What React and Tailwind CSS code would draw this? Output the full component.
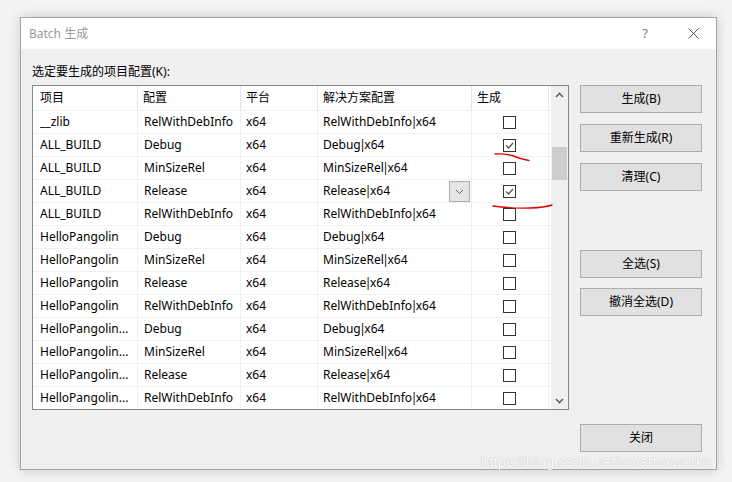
import React from "react"

const rows = [
  ["__zlib", "RelWithDebInfo", "x64", "RelWithDebInfo|x64", false],
  ["ALL_BUILD", "Debug", "x64", "Debug|x64", true],
  ["ALL_BUILD", "MinSizeRel", "x64", "MinSizeRel|x64", false],
  ["ALL_BUILD", "Release", "x64", "Release|x64", true, true],
  ["ALL_BUILD", "RelWithDebInfo", "x64", "RelWithDebInfo|x64", false],
  ["HelloPangolin", "Debug", "x64", "Debug|x64", false],
  ["HelloPangolin", "MinSizeRel", "x64", "MinSizeRel|x64", false],
  ["HelloPangolin", "Release", "x64", "Release|x64", false],
  ["HelloPangolin", "RelWithDebInfo", "x64", "RelWithDebInfo|x64", false],
  ["HelloPangolin...", "Debug", "x64", "Debug|x64", false],
  ["HelloPangolin...", "MinSizeRel", "x64", "MinSizeRel|x64", false],
  ["HelloPangolin...", "Release", "x64", "Release|x64", false],
  ["HelloPangolin...", "RelWithDebInfo", "x64", "RelWithDebInfo|x64", false],
]

function Checkbox({ checked }) {
  return (
    <div className="w-[13px] h-[13px] border border-[#333] bg-white flex items-center justify-center">
      {checked && (
        <svg width="11" height="11" viewBox="0 0 11 11">
          <path d="M2 5.5 L4.5 8 L9 3" fill="none" stroke="#555" strokeWidth="1.3" />
        </svg>
      )}
    </div>
  )
}

function Button({ children, className = "" }) {
  return (
    <div className={"w-[122px] h-[28px] bg-[#e1e1e1] border border-[#adadad] flex items-center justify-center text-[12px] text-black " + className}>
      {children}
    </div>
  )
}

// solution config text, pipe drawn tight like the original font
function SolutionConfig({ text }) {
  const [a, b] = text.split("|")
  return (
    <span>
      {a}
      <span className="mx-[-1.5px]">|</span>
      {b}
    </span>
  )
}

export default function App() {
  return (
    <div
      className="w-[732px] h-[482px] bg-[#f4f4f4] relative overflow-hidden pl-[20px] pt-[17px]"
      style={{ fontFamily: '"Noto Sans", "Noto Sans CJK SC", sans-serif' }}
    >
      {/* dialog */}
      <div className="w-[697px] h-[453px] border border-[#a3a3a3] bg-[#f0f0f0] shadow-[0_0_12px_rgba(0,0,0,0.18)] flex flex-col">
        {/* title bar */}
        <div className="h-[31px] bg-white flex items-center pl-[8px] shrink-0">
          <span className="text-[12px] text-[#9a9a9a] flex-1">Batch 生成</span>
          <span className="text-[13px] text-[#7a7a7a] mr-[40px]">?</span>
          <svg width="11" height="11" viewBox="0 0 11 11" className="mr-[17px]">
            <path d="M0.5 0.5 L10.5 10.5 M10.5 0.5 L0.5 10.5" stroke="#555" strokeWidth="1" />
          </svg>
        </div>

        {/* body */}
        <div className="flex pl-[11px] pt-[14px]">
          <div className="w-[537px]">
            <div className="text-[12px] leading-[18px] h-[18px] mb-[4px] text-black">选定要生成的项目配置(K):</div>
            <div className="h-[325px] border border-[#828790] bg-white flex">
              <div className="w-[518px] text-[12px] text-black">
                {/* header */}
                <div className="flex h-[24px] items-center">
                  <div className="w-[105px] h-full flex items-center pl-[7px] border-r border-[#e5e5e5]">项目</div>
                  <div className="w-[103px] h-full flex items-center pl-[5px] border-r border-[#e5e5e5]">配置</div>
                  <div className="w-[77px] h-full flex items-center pl-[5px] border-r border-[#e5e5e5]">平台</div>
                  <div className="w-[154px] h-full flex items-center pl-[5px] border-r border-[#e5e5e5]">解决方案配置</div>
                  <div className="w-[77px] h-full flex items-center pl-[5px] border-r border-[#e5e5e5]">生成</div>
                </div>
                {rows.map((r, i) => (
                  <div key={i} className="flex h-[23px] border-t border-[#f0f0f0]">
                    <div className="w-[105px] flex items-center pl-[7px] border-r border-[#f0f0f0] whitespace-nowrap">{r[0]}</div>
                    <div className="w-[103px] flex items-center pl-[6px] border-r border-[#f0f0f0] whitespace-nowrap">{r[1]}</div>
                    <div className="w-[77px] flex items-center pl-[5px] border-r border-[#f0f0f0]">{r[2]}</div>
                    <div className="w-[154px] flex items-center justify-between pl-[5px] border-r border-[#f0f0f0] whitespace-nowrap">
                      <SolutionConfig text={r[3]} />
                      {r[5] && (
                        <div className="w-[21px] h-[21px] mr-[1px] self-end bg-[#e5e5e5] border border-[#adadad] flex items-center justify-center">
                          <svg width="9" height="6" viewBox="0 0 9 6">
                            <path d="M1 1 L4.5 4.5 L8 1" fill="none" stroke="#666" strokeWidth="1" />
                          </svg>
                        </div>
                      )}
                    </div>
                    <div className="w-[77px] flex items-center justify-center pr-[2px] border-r border-[#f0f0f0]">
                      <Checkbox checked={r[4]} />
                    </div>
                  </div>
                ))}
              </div>
              {/* scrollbar */}
              <div className="w-[17px] h-full bg-[#f0f0f0] flex flex-col items-center">
                <div className="h-[17px] flex items-center justify-center">
                  <svg width="9" height="6" viewBox="0 0 9 6">
                    <path d="M1 5 L4.5 1.5 L8 5" fill="none" stroke="#606060" strokeWidth="1.6" />
                  </svg>
                </div>
                <div className="w-[15px] h-[33px] bg-[#cdcdcd] mt-[44px]" />
                <div className="flex-1" />
                <div className="h-[17px] flex items-center justify-center">
                  <svg width="9" height="6" viewBox="0 0 9 6">
                    <path d="M1 1 L4.5 4.5 L8 1" fill="none" stroke="#606060" strokeWidth="1.6" />
                  </svg>
                </div>
              </div>
            </div>
          </div>

          {/* buttons */}
          <div className="ml-[11px] pt-[22px] flex flex-col">
            <Button>生成(B)</Button>
            <Button className="mt-[11px]">重新生成(R)</Button>
            <Button className="mt-[11px]">清理(C)</Button>
            <Button className="mt-[59px]">全选(S)</Button>
            <Button className="mt-[10px]">撤消全选(D)</Button>
            <Button className="mt-[108px]">关闭</Button>
          </div>
        </div>
      </div>

      {/* red hand-drawn marks */}
      <svg className="absolute left-0 top-0 pointer-events-none" width="732" height="482">
        <path d="M495 154 Q505 153.5 512 155.5 Q520 159 529 160.5" fill="none" stroke="#e60000" strokeWidth="1.4" strokeLinecap="round" />
        <path d="M493 206 Q510 208.5 530 208 Q545 207.5 552 205" fill="none" stroke="#e60000" strokeWidth="1.4" strokeLinecap="round" />
      </svg>

      {/* watermark */}
      <div
        className="absolute left-[481px] top-[451px] text-[15px] text-white whitespace-nowrap"
        style={{ fontFamily: '"Liberation Sans", Arial, sans-serif', textShadow: "0 0 1px rgba(0,0,0,0.35)" }}
      >
        https://blog.csdn.net/smartvxworks
      </div>
    </div>
  )
}
